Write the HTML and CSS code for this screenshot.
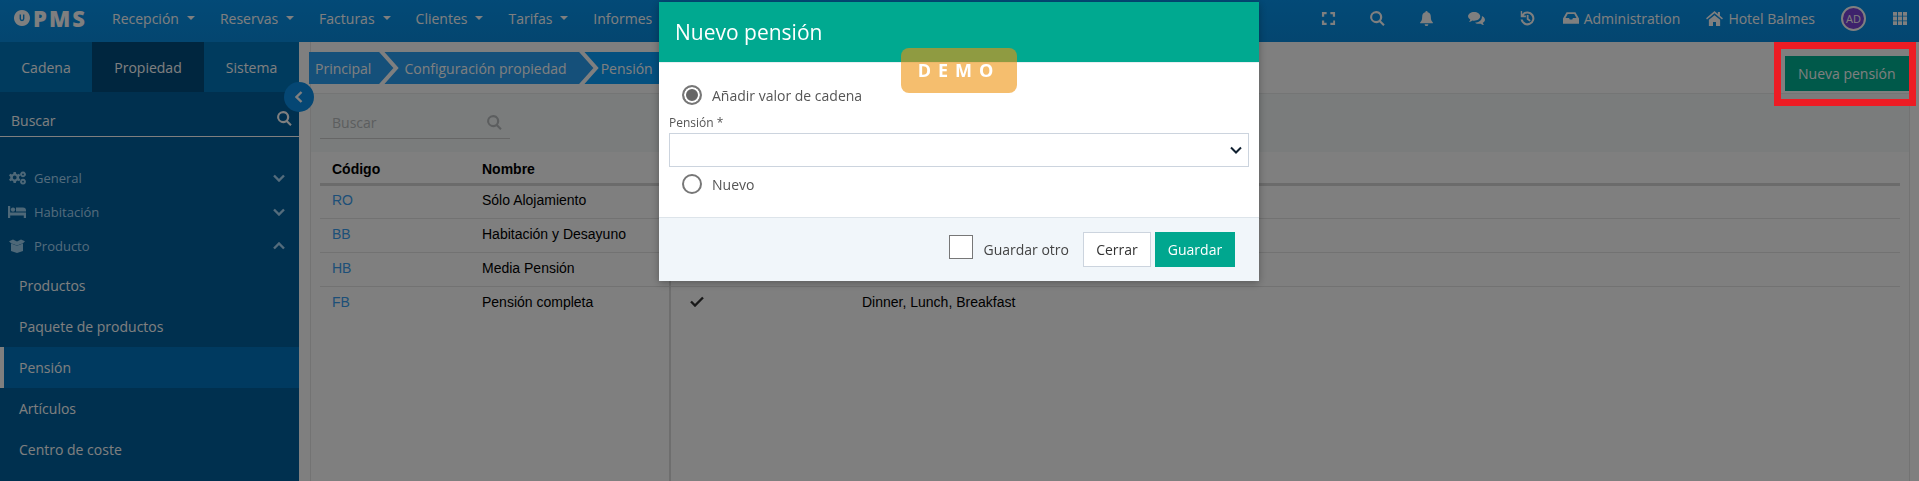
FILE: index.html
```html
<!DOCTYPE html>
<html lang="es">
<head>
    <meta charset="utf-8">
    <title>Pensión</title>
    <link rel="stylesheet" href="styles.css">
</head>
<body>
    <!-- Top bar -->
    <header class="navbar">
        <div class="logo">
            <svg class="logo-mark" viewBox="0 0 16 16"><path fill-rule="evenodd" d="M8 0a8 8 0 1 1-.01 0zM5.6 4.6v4.2a2.4 2.4 0 0 0 4.8 0V4.6H9v4.2a1 1 0 0 1-2 0V4.6z"/></svg>
            <span class="logo-text">PMS</span>
        </div>
        <nav class="nav-menu">
            <a class="nav-item">Recepción<i class="caret"></i></a>
            <a class="nav-item">Reservas<i class="caret"></i></a>
            <a class="nav-item">Facturas<i class="caret"></i></a>
            <a class="nav-item">Clientes<i class="caret"></i></a>
            <a class="nav-item">Tarifas<i class="caret"></i></a>
            <a class="nav-item">Informes</a>
        </nav>
        <div class="nav-tools">
            <svg class="tool tool-full" viewBox="0 0 16 16"><path d="M1 1h5v2.4H3.4V6H1zM10 1h5v5h-2.400V3.400H10zM1 10h2.400v2.600H6V15H1zM13 10h2v5h-5v-2.400h3z"/></svg>
            <svg class="tool tool-search" viewBox="0 0 16 16"><path fill-rule="evenodd" d="M6.500 0a6.500 6.500 0 0 1 5.200 10.400l4 4-1.600 1.600-4-4A6.500 6.500 0 1 1 6.500 0zm0 2.300a4.200 4.200 0 1 0 0 8.400 4.200 4.200 0 0 0 0-8.400z"/></svg>
            <svg class="tool tool-bell" viewBox="0 0 16 16"><path d="M8 0a1.200 1.200 0 0 1 1.200 1.300C11.500 1.800 12.600 3.600 12.600 6c0 3.600 1 4.800 2.200 6.200v.8H1.200v-.8C2.400 10.800 3.400 9.600 3.400 6c0-2.400 1.100-4.200 3.400-4.700A1.200 1.200 0 0 1 8 0zM6 14h4a2 2 0 0 1-4 0z"/></svg>
            <svg class="tool tool-chat" viewBox="0 0 18 16"><path d="M6.500 1C10 1 13 3 13 5.700s-3 4.700-6.500 4.700c-.7 0-1.300-.1-1.900-.2C3.700 11 2.500 11.500 1 11.700c.7-.8 1.200-1.600 1.400-2.600C1 8.200 0 7 0 5.700 0 3 3 1 6.500 1z"/><path d="M14.300 5c2 .7 3.700 2.300 3.700 4.200 0 1.300-.9 2.500-2.300 3.300.2 1 .7 1.800 1.300 2.500-1.400-.2-2.600-.7-3.500-1.500-.6.100-1.200.2-1.800.2-1.700 0-3.200-.5-4.300-1.300 3.800-.1 7.400-2.500 7.400-6.300 0-.3 0-.6-.1-.9z"/></svg>
            <svg class="tool tool-history" viewBox="0 0 16 16"><path d="M2.300 0v3.100A7.400 7.400 0 1 1 .6 9h2.300a5.200 5.200 0 1 0 1-4.300l2.400 0v2H.8V0z"/><path d="M7.200 4.200h1.900v3.900l2.300 1.700-1.100 1.500-3.100-2.300z"/></svg>
            <span class="tool-label tool-admin">
                <svg class="tool tool-inbox" viewBox="0 0 18 14"><path fill-rule="evenodd" d="M4 0h10l4 7v6H0V7zm1.300 2L2.800 6.400h4l.8 1.800h2.800l.8-1.800h4L12.700 2z"/></svg>
                Administration
            </span>
            <span class="tool-label tool-hotel">
                <svg class="tool tool-home" viewBox="0 0 18 16"><path d="M9 0l3.600 3.100V1h2.200v4l3.200 2.800-1 1.200L9 2.400 1 9 0 7.800z"/><path d="M3 9.400L9 4.400l6 5V16h-4.400v-4.400H7.400V16H3z"/></svg>
                Hotel Balmes
            </span>
            <span class="avatar">AD</span>
            <svg class="tool tool-grid" viewBox="0 0 15 15" preserveAspectRatio="none"><path d="M0 0h4.300v4.300H0zM5.300 0h4.400v4.300H5.300zM10.700 0H15v4.300h-4.300zM0 5.300h4.300v4.400H0zM5.300 5.300h4.400v4.400H5.300zM10.700 5.300H15v4.400h-4.300zM0 10.700h4.300V15H0zM5.300 10.700h4.400V15H5.300zM10.700 10.700H15V15h-4.300z"/></svg>
        </div>
    </header>

    <div class="layout">
        <!-- Left menu -->
        <aside class="sidebar">
            <div class="side-tabs">
                <a class="side-tab tab-chain">Cadena</a>
                <a class="side-tab tab-property">Propiedad</a>
                <a class="side-tab tab-system">Sistema</a>
            </div>
            <div class="side-search">
                <span>Buscar</span>
                <svg class="search-icon" viewBox="0 0 16 16"><path fill-rule="evenodd" d="M6.500 0a6.500 6.500 0 0 1 5.200 10.400l4 4-1.600 1.600-4-4A6.500 6.500 0 1 1 6.500 0zm0 2.300a4.200 4.200 0 1 0 0 8.400 4.200 4.200 0 0 0 0-8.400z"/></svg>
            </div>
            <ul class="side-menu">
                <li class="menu-group">
                    <svg class="group-icon" viewBox="0 0 18 14"><path fill-rule="evenodd" d="M5.600 1h2.200l.4 1.800 1.200.6 1.700-.7 1.200 1.800-1.300 1.300.1 1.400 1.300 1.200-1.200 1.900-1.700-.7-1.200.7-.5 1.800H5.600l-.4-1.800-1.200-.7-1.800.7L1 8.400l1.300-1.200V5.800L1 4.500l1.200-1.800 1.800.7 1.200-.6zm1.100 3.600a1.900 1.900 0 1 0 0 3.800 1.900 1.900 0 0 0 0-3.800z"/><path fill-rule="evenodd" d="M15 .5a2.900 2.900 0 1 1-.01 0zm0 2a.9.900 0 1 0 0 1.800.9.900 0 0 0 0-1.800zM15 7.800a2.900 2.900 0 1 1-.01 0zm0 2a.9.900 0 1 0 0 1.800.9.900 0 0 0 0-1.800z"/></svg>
                    General
                    <svg class="chev" viewBox="0 0 12 8"><path d="M1 1.500l5 5 5-5" /></svg>
                </li>
                <li class="menu-group">
                    <svg class="group-icon" viewBox="0 0 18 14"><path d="M0 1h2.200v6.500H18V13h-2.200v-2.500H2.200V13H0z"/><circle cx="5" cy="4.600" r="2.200"/><path d="M8 2.500h7a3 3 0 0 1 3 3v1H8z"/></svg>
                    Habitación
                    <svg class="chev" viewBox="0 0 12 8"><path d="M1 1.500l5 5 5-5" /></svg>
                </li>
                <li class="menu-group">
                    <svg class="group-icon" viewBox="0 0 18 14"><path d="M3 4.600l6 2.200 6-2.200V12l-6 2-6-2z"/><path d="M1 2.200L5 .5l4 2 4-2 4 1.700-2 2-6 2.200-6-2.200z"/></svg>
                    Producto
                    <svg class="chev" viewBox="0 0 12 8"><path d="M1 6.500l5-5 5 5" /></svg>
                </li>
                <li class="menu-sub">
                    <a class="sub-item">Productos</a>
                    <a class="sub-item">Paquete de productos</a>
                    <a class="sub-item sub-active">Pensión</a>
                    <a class="sub-item">Artículos</a>
                    <a class="sub-item">Centro de coste</a>
                </li>
            </ul>
            <button class="collapse-btn" type="button">
                <svg viewBox="0 0 8 12"><path d="M6.500 1l-5 5 5 5"/></svg>
            </button>
        </aside>

        <!-- Page content -->
        <main class="content">
            <div class="page-top">
                <div class="crumbs">
                    <span class="crumb crumb-first">Principal</span>
                    <svg class="crumb-sep" viewBox="0 0 22 32"><path class="sep-right" d="M0 0h22v32H0z"/><path class="sep-line" d="M2-2l16 18L2 34"/></svg>
                    <span class="crumb crumb-second">Configuración propiedad</span>
                    <svg class="crumb-sep" viewBox="0 0 22 32"><path class="sep-right sep-current" d="M0 0h22v32H0z"/><path class="sep-left" d="M0 0h2l16 16L2 32H0z"/><path class="sep-line" d="M2-2l16 18L2 34"/></svg>
                    <span class="crumb crumb-current">Pensión</span>
                </div>
                <button class="btn-new" type="button">Nueva pensión</button>
            </div>

            <div class="filter-band">
                <div class="filter-search">
                    <span>Buscar</span>
                    <svg viewBox="0 0 16 16"><path fill-rule="evenodd" d="M6.500 0a6.500 6.500 0 0 1 5.200 10.400l4 4-1.600 1.600-4-4A6.500 6.500 0 1 1 6.500 0zm0 2.300a4.200 4.200 0 1 0 0 8.400 4.200 4.200 0 0 0 0-8.400z"/></svg>
                </div>
            </div>

            <div class="table-wrap">
                <table class="data-table">
                    <thead>
                        <tr><th class="col-code">Código</th><th class="col-name">Nombre</th><th class="col-check"></th><th></th></tr>
                    </thead>
                    <tbody>
                        <tr><td><a>RO</a></td><td>Sólo Alojamiento</td><td></td><td></td></tr>
                        <tr><td><a>BB</a></td><td>Habitación y Desayuno</td><td></td><td></td></tr>
                        <tr><td><a>HB</a></td><td>Media Pensión</td><td></td><td></td></tr>
                        <tr>
                            <td><a>FB</a></td>
                            <td>Pensión completa</td>
                            <td><svg class="check" viewBox="0 0 14 11"><path d="M1 5.500l4 4 8-8"/></svg></td>
                            <td>Dinner, Lunch, Breakfast</td>
                        </tr>
                    </tbody>
                </table>
            </div>
        </main>
    </div>

    <!-- Dialog -->
    <div class="backdrop">
        <div class="modal">
            <div class="modal-head">Nuevo pensión</div>
            <div class="modal-body">
                <label class="radio-row"><span class="radio radio-on"></span>Añadir valor de cadena</label>
                <div class="field-label">Pensión *</div>
                <div class="select-box">
                    <svg viewBox="0 0 12 8"><path d="M1 1.500l5 5 5-5"/></svg>
                </div>
                <label class="radio-row"><span class="radio"></span>Nuevo</label>
            </div>
            <div class="modal-foot">
                <span class="check-box"></span>
                <span class="check-label">Guardar otro</span>
                <button class="btn btn-close" type="button">Cerrar</button>
                <button class="btn btn-save" type="button">Guardar</button>
            </div>
        </div>
        <div class="demo-badge">DEMO</div>
    </div>

    <!-- Highlight round the action button -->
    <div class="highlight"></div>
</body>
</html>
```

FILE: styles.css
```css
* {
    box-sizing: border-box;
    margin: 0;
    padding: 0;
}

html, body {
    height: 100%;
    overflow: hidden;
}

body {
    display: flex;
    flex-direction: column;
    background: #fff;
    color: #000;
    font-family: "Open Sans", "Liberation Sans", sans-serif;
    font-size: 14px;
}

/* Top bar */
.navbar {
    display: flex;
    align-items: center;
    flex: 0 0 42px;
    height: 42px;
    padding: 0 0 6px 14px;
    background: linear-gradient(#0694ee, #088ce0);
    color: #fff;
}

.logo {
    display: flex;
    align-items: center;
    width: 98px;
}

.logo-mark {
    width: 16px;
    height: 16px;
    fill: #fff;
}

.logo-text {
    margin-left: 3px;
    font-size: 22px;
    font-weight: 800;
    letter-spacing: 2px;
    line-height: 24px;
}

.nav-menu {
    display: flex;
}

.nav-item {
    display: flex;
    align-items: center;
    margin-right: 25px;
}

.nav-item:last-child {
    margin-right: 0;
}

.caret {
    width: 0;
    height: 0;
    margin-left: 8px;
    border-top: 4px solid #fff;
    border-left: 4px solid transparent;
    border-right: 4px solid transparent;
}

.nav-tools {
    display: flex;
    align-items: center;
    margin-left: auto;
    padding-right: 12px;
}

.tool {
    display: block;
    height: 15px;
    width: 15px;
    fill: #fff;
}

.tool-full { margin-right: 34px; }
.tool-search { margin-right: 34px; }
.tool-bell { margin-right: 34px; }
.tool-chat { width: 17px; margin-right: 35px; }
.tool-history { margin-right: 28px; }

.tool-label {
    display: flex;
    align-items: center;
    gap: 5px;
}

.tool-inbox { width: 16px; height: 13px; }
.tool-home { width: 17px; }
.tool-admin { margin-right: 26px; }
.tool-hotel { margin-right: 26px; }

.avatar {
    display: flex;
    align-items: center;
    justify-content: center;
    width: 25px;
    height: 25px;
    margin-right: 27px;
    border: 2px solid #fff;
    border-radius: 50%;
    background: #7a44d8;
    font-size: 11px;
}

.tool-grid { width: 14px; height: 13px; }

/* Layout */
.layout {
    display: flex;
    flex: 1;
    min-height: 0;
}

/* Sidebar */
.sidebar {
    position: relative;
    flex: 0 0 299px;
    background: #00609e;
    color: #fff;
}

.side-tabs {
    display: flex;
    height: 50px;
}

.side-tab {
    display: flex;
    align-items: center;
    justify-content: center;
}

.tab-chain { width: 92px; background: #0076bc; }
.tab-property { width: 112px; background: #004c7e; }
.tab-system { width: 95px; background: #0076bc; }

.side-search {
    display: flex;
    align-items: center;
    justify-content: space-between;
    height: 45px;
    padding: 12px 7px 0 11px;
    border-bottom: 1px solid #fff;
}

.search-icon {
    width: 15px;
    height: 15px;
    margin-bottom: 4px;
    fill: #fff;
}

.side-menu {
    padding-top: 24px;
    list-style: none;
}

.menu-group {
    display: flex;
    align-items: center;
    height: 34px;
    padding: 0 14px 1px 8px;
    color: #a8d8f8;
    font-size: 13px;
}

.group-icon {
    width: 18px;
    height: 14px;
    margin-right: 8px;
    fill: #9cd0f0;
}

.chev {
    width: 12px;
    height: 8px;
    margin-left: auto;
    fill: none;
    stroke: #a8d8f8;
    stroke-width: 2.400;
}

.menu-sub {
    padding-top: 2px;
}

.sub-item {
    display: flex;
    align-items: center;
    height: 41px;
    padding-left: 19px;
}

.sub-active {
    padding-left: 15px;
    border-left: 4px solid #fff;
    background: #0074c0;
}

.collapse-btn {
    position: absolute;
    top: 40px;
    left: 284px;
    display: flex;
    align-items: center;
    justify-content: center;
    width: 30px;
    height: 30px;
    border: 0;
    border-radius: 50%;
    background: #0a8ee8;
}

.collapse-btn svg {
    width: 8px;
    height: 12px;
    fill: none;
    stroke: #fff;
    stroke-width: 2.400;
}

/* Content */
.content {
    display: flex;
    flex: 1;
    flex-direction: column;
    min-width: 0;
    margin: 0 9px 0 11px;
    border-left: 1px solid #e6e6e6;
    border-right: 1px solid #e6e6e6;
}

.page-top {
    display: flex;
    justify-content: space-between;
    flex: 0 0 52px;
    padding-top: 10px;
    margin-left: -2px;
    margin-right: -7px;
    border-bottom: 1px solid #e8eaea;
}

.crumbs {
    display: flex;
    height: 32px;
    color: #fff;
}

.crumb {
    display: flex;
    align-items: center;
}

.crumb-first {
    padding: 0 7px 0 6px;
    background: #2aa0f4;
}

.crumb-second {
    padding: 0 11px 0 4px;
    background: #2aa0f4;
}

.crumb-current {
    padding: 0 20px 0 1px;
    background: #08a0ff;
}

.crumb-sep {
    width: 22px;
    height: 32px;
    overflow: hidden;
}

.sep-left { fill: #2aa0f4; }
.sep-right { fill: #2aa0f4; }
.sep-current { fill: #08a0ff; }

.sep-line {
    fill: none;
    stroke: #fff;
    stroke-width: 4;
}

.btn-new {
    width: 131px;
    height: 35px;
    margin-top: 4px;
    padding-left: 13px;
    border: 0;
    background: #00b294;
    color: #fff;
    font: inherit;
    text-align: left;
}

.filter-band {
    flex: 0 0 58px;
    padding: 10px 0 0 9px;
    background: #f4f8f8;
}

.filter-search {
    display: flex;
    align-items: center;
    justify-content: space-between;
    width: 190px;
    height: 35px;
    padding: 2px 8px 0 12px;
    border-bottom: 1px solid #ccc;
    color: #b8bcbe;
}

.filter-search svg {
    width: 15px;
    height: 15px;
    fill: #b8bcbe;
}

.table-wrap {
    position: relative;
    flex: 1;
    padding: 0 9px;
}

/* column divider runs on below the rows */
.table-wrap::after {
    content: "";
    position: absolute;
    top: 0;
    bottom: 0;
    left: 358px;
    width: 2px;
    background: #dcdcdc;
}

.data-table {
    width: 100%;
    border-collapse: collapse;
    table-layout: fixed;
    font-family: "Liberation Sans", Arial, sans-serif;
}

.data-table th {
    height: 32px;
    padding: 3px 12px 0;
    border-bottom: 3px solid #d6d6d6;
    text-align: left;
}

.data-table td {
    height: 34px;
    padding: 0 12px 3px;
    border-bottom: 1px solid #e4e4e4;
}

.data-table tr:last-child td {
    border-bottom: 0;
}

.data-table td a {
    color: #3a9ef0;
}

.col-code { width: 150px; }
.col-name { width: 200px; }
.col-check { width: 180px; }

.check {
    display: block;
    width: 14px;
    height: 11px;
    margin-left: 8px;
    fill: none;
    stroke: #333;
    stroke-width: 2.400;
}

/* Dialog */
.backdrop {
    position: fixed;
    inset: 0;
    display: flex;
    justify-content: center;
    padding: 2px 1px 0 0;
    background: rgba(0, 0, 0, 0.5);
}

.modal {
    display: flex;
    flex-direction: column;
    width: 600px;
    height: 279px;
    background: #fff;
    box-shadow: 0 2px 8px rgba(0, 0, 0, 0.3);
}

.modal-head {
    display: flex;
    align-items: center;
    flex: 0 0 60px;
    padding-bottom: 1px;
    padding-left: 16px;
    background: #00a990;
    color: #fff;
    font-size: 21px;
}

.modal-body {
    flex: 1;
    padding: 22px 10px 0;
    border-top: 1px solid #e8eef2;
    color: #555;
}

.radio-row {
    display: flex;
    align-items: center;
    height: 20px;
    margin-left: 13px;
}

.radio {
    width: 20px;
    height: 20px;
    margin-right: 10px;
    border: 2px solid #777;
    border-radius: 50%;
    background: #fff;
}

.radio-on {
    box-shadow: inset 0 0 0 2px #fff;
    background: #666;
}

.field-label {
    height: 17px;
    margin-top: 9px;
    font-size: 12px;
    line-height: 17px;
}

.select-box {
    display: flex;
    align-items: center;
    justify-content: flex-end;
    height: 34px;
    margin-top: 2px;
    margin-bottom: 7px;
    padding-right: 6px;
    border: 1px solid #ccd4de;
}

.select-box svg {
    width: 12px;
    height: 8px;
    fill: none;
    stroke: #102030;
    stroke-width: 2;
}

.modal-foot {
    display: flex;
    align-items: center;
    flex: 0 0 64px;
    justify-content: flex-end;
    padding-right: 24px;
    border-top: 1px solid #dde4ea;
    background: #f1f6fa;
}

.check-box {
    width: 24px;
    height: 24px;
    margin-right: 10px;
    margin-bottom: 6px;
    border: 1px solid #777;
    background: #fff;
}

.check-label {
    margin-right: 14px;
    margin-bottom: 1px;
    color: #444;
}

.btn {
    height: 35px;
    border: 1px solid #ccd4de;
    font: inherit;
}

.btn-close {
    width: 68px;
    margin-right: 4px;
    background: #fff;
    color: #333;
}

.btn-save {
    width: 80px;
    border: 0;
    background: #00a78f;
    color: #fff;
}

.demo-badge {
    position: absolute;
    top: 48px;
    left: 901px;
    width: 116px;
    height: 45px;
    border-radius: 8px;
    background: rgba(238, 147, 14, 0.6);
    color: #fff;
    font-size: 18px;
    font-weight: 700;
    letter-spacing: 7px;
    line-height: 44px;
    text-align: center;
}

/* Annotation */
.highlight {
    position: fixed;
    top: 42px;
    right: 3px;
    width: 142px;
    height: 64px;
    border: 7px solid #ed1c24;
}
```
